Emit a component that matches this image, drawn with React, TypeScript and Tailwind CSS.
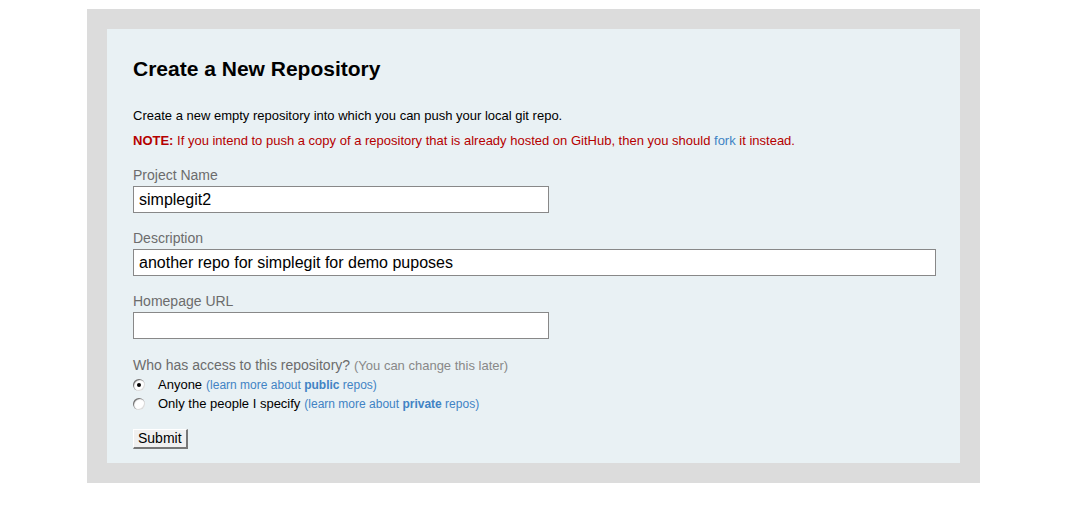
import React from "react";

function Radio({ checked }: { checked?: boolean }) {
  return (
    <span className="inline-flex w-[12px] h-[12px] rounded-full bg-white items-center justify-center shrink-0 shadow-[inset_1px_1px_1px_#666,inset_-1px_-1px_0_#ddd]">
      {checked ? <span className="w-[4px] h-[4px] rounded-full bg-black" /> : null}
    </span>
  );
}

export default function App() {
  return (
    <div className="w-[1066px] h-[514px] bg-white pt-[9px] pl-[87px]" style={{ fontFamily: '"Liberation Sans", Arial, sans-serif' }}>
      <div className="w-[893px] h-[474px] bg-[#dcdcdc] p-[20px]">
        <div className="h-full bg-[#e9f1f4] pl-[26px] pr-[24px] pt-[27px]">
          <h1 className="text-[21px] font-bold text-black leading-[26px]">Create a New Repository</h1>
          <p className="mt-[26px] text-[13px] leading-[16px] text-black">
            Create a new empty repository into which you can push your local git repo.
          </p>
          <p className="mt-[9px] text-[13px] leading-[16px] text-[#b50000]">
            <b>NOTE:</b> If you intend to push a copy of a repository that is already hosted on GitHub, then you should{" "}
            <span className="text-[#4183c4]">fork</span> it instead.
          </p>

          <div className="mt-[17px] text-[14px] leading-[18px] text-[#6c6c6c]">Project Name</div>
          <div className="mt-[2px] w-[416px] h-[27px] bg-white border border-[#888] px-[5px] text-[16px] leading-[25px] text-black">simplegit2</div>

          <div className="mt-[16px] text-[14px] leading-[18px] text-[#6c6c6c]">Description</div>
          <div className="mt-[2px] w-[803px] h-[27px] bg-white border border-[#888] px-[5px] text-[16px] leading-[25px] text-black">another repo for simplegit for demo puposes</div>

          <div className="mt-[16px] text-[14px] leading-[18px] text-[#6c6c6c]">Homepage URL</div>
          <div className="mt-[2px] w-[416px] h-[27px] bg-white border border-[#888]" />

          <div className="mt-[17px] text-[14px] leading-[18px] text-[#6c6c6c]">
            Who has access to this repository? <span className="text-[13px] text-[#888]">(You can change this later)</span>
          </div>
          <div className="flex items-center h-[19px] text-[13px] text-black">
            <Radio checked />
            <span className="ml-[13px]">Anyone</span>
            <span className="ml-[4px] text-[12px] text-[#4183c4]">(learn more about <b>public</b> repos)</span>
          </div>
          <div className="flex items-center h-[19px] text-[13px] text-black">
            <Radio />
            <span className="ml-[13px]">Only the people I specify</span>
            <span className="ml-[4px] text-[12px] text-[#4183c4]">(learn more about <b>private</b> repos)</span>
          </div>

          <button className="mt-[16px] h-[20px] px-[4px] bg-[#f0f0f0] text-[14px] leading-[17px] text-black border border-t-[#fff] border-l-[#fff] border-r-[#777] border-b-[#777] border-r-2 border-b-2">
            Submit
          </button>
        </div>
      </div>
    </div>
  );
}
